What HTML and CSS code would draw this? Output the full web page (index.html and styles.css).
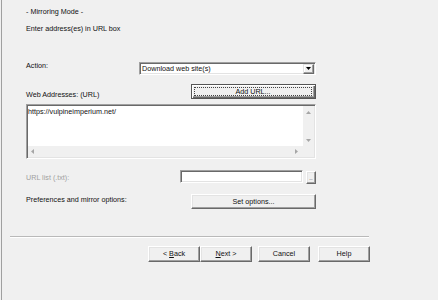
FILE: index.html
```html
<!DOCTYPE html>
<html>
<head>
<meta charset="utf-8">
<link rel="stylesheet" href="styles.css">
</head>
<body>
<div class="frame">
  <div class="main">
    <div class="title">- Mirroring Mode -</div>
    <div class="intro">Enter address(es) in URL box</div>

    <div class="row row-action">
      <div class="label">Action:</div>
      <div class="select">
        <span class="select-text">Download web site(s)</span>
        <span class="select-btn">
          <svg width="5" height="3" viewBox="0 0 5 3"><path d="M0 0H5L2.5 3Z" fill="#000"/></svg>
        </span>
      </div>
    </div>

    <div class="row row-web">
      <div class="label label-web">Web Addresses: (URL)</div>
      <div class="btn btn-default btn-wide"><span class="focus">Add URL...</span></div>
    </div>

    <div class="textarea">
      <div class="ta-text">https://vulpineimperium.net/</div>
      <div class="vscroll">
        <svg width="5" height="3" viewBox="0 0 5 3"><path d="M0 3H5L2.5 0Z" fill="#a6a6a6"/></svg>
        <svg width="5" height="3" viewBox="0 0 5 3"><path d="M0 0H5L2.5 3Z" fill="#a6a6a6"/></svg>
      </div>
      <div class="hscroll">
        <svg width="3" height="5" viewBox="0 0 3 5"><path d="M3 0V5L0 2.5Z" fill="#a6a6a6"/></svg>
        <svg width="3" height="5" viewBox="0 0 3 5"><path d="M0 0V5L3 2.5Z" fill="#a6a6a6"/></svg>
      </div>
      <div class="corner"></div>
    </div>

    <div class="row row-url">
      <div class="label label-url disabled">URL list (.txt):</div>
      <div class="url-group">
        <div class="input"></div>
        <div class="btn btn-dots">..</div>
      </div>
    </div>

    <div class="row row-prefs">
      <div class="label label-prefs">Preferences and mirror options:</div>
      <div class="btn btn-wide">Set options...</div>
    </div>
  </div>

  <div class="sep"></div>

  <div class="buttons">
    <div class="btn btn-nav">&lt;&nbsp;<u>B</u>ack</div>
    <div class="btn btn-nav"><u>N</u>ext &gt;</div>
    <div class="btn btn-nav btn-cancel">Cancel</div>
    <div class="btn btn-nav btn-help">Help</div>
  </div>
</div>
</body>
</html>
```

FILE: styles.css
```css
* { box-sizing: border-box; }
html, body { margin: 0; padding: 0; }
body {
  background: #f0f0f0;
  font-family: "Liberation Sans", Arial, sans-serif;
  font-size: 7.2px;
  color: #111;
  width: 438px;
  height: 300px;
  overflow: hidden;
}
.frame {
  margin-left: 1px;
  border-left: 1px solid #a0a0a0;
  height: 300px;
}
.main {
  padding-left: 24px;
  width: 314px;
}
.title {
  padding-top: 8px;
  line-height: 8px;
}
.intro {
  margin-top: 9px;
  line-height: 8px;
}
.row {
  display: flex;
  align-items: flex-start;
  justify-content: space-between;
}
.label { line-height: 8px; white-space: nowrap; }
.disabled { color: #a0a0a0; }

.row-action { margin-top: 29px; }
.select {
  width: 177px;
  height: 13px;
  background: #fff;
  border: 1px solid;
  border-color: #a0a0a0 #fff #fff #a0a0a0;
  box-shadow: inset 1px 1px #696969, inset -1px -1px #e3e3e3;
  display: flex;
  align-items: center;
  justify-content: space-between;
  padding: 1px 1px 1px 2px;
}
.select-text { line-height: 8px; padding-top: 1px; }
.select-btn {
  width: 11px;
  height: 10px;
  background: #f0f0f0;
  border: 1px solid;
  border-color: #e3e3e3 #696969 #696969 #e3e3e3;
  box-shadow: inset -1px -1px #a0a0a0, inset 1px 1px #fff;
  display: flex;
  align-items: center;
  justify-content: center;
}

.btn {
  background: #f0f0f0;
  border: 1px solid;
  border-color: #fff #696969 #696969 #fff;
  box-shadow: inset -1px -1px #a0a0a0, inset 1px 1px #e3e3e3;
  display: flex;
  align-items: center;
  justify-content: center;
  line-height: 8px;
  white-space: nowrap;
}
.btn-wide { width: 125px; height: 15px; }
.btn-default {
  border: 1px solid #555;
  box-shadow: inset 1px 1px #fff, inset -1px -1px #696969, inset -2px -2px #a0a0a0;
  padding: 2px 3px 2px 2px;
}
.focus {
  flex: 1;
  height: 9px;
  border: 1px dotted #444;
  display: flex;
  align-items: center;
  justify-content: center;
  line-height: 7px;
}

.row-web { margin-top: 9px; }
.label-web { margin-top: 7px; }

.textarea {
  margin-top: 5px;
  width: 290px;
  height: 55px;
  border: 1px solid;
  border-color: #a0a0a0 #fff #fff #a0a0a0;
  box-shadow: inset 1px 1px #696969, inset -1px -1px #e3e3e3;
  padding: 1px;
  display: grid;
  grid-template-columns: 1fr 11px;
  grid-template-rows: 1fr 11px;
}
.ta-text {
  background: #fff;
  line-height: 8px;
  padding: 2px 0 0 0;
}
.vscroll {
  background: #f0f0f0;
  display: flex;
  flex-direction: column;
  align-items: center;
  justify-content: space-between;
  padding: 5px 0 4px;
}
.hscroll {
  background: #f0f0f0;
  display: flex;
  align-items: center;
  justify-content: space-between;
  padding: 0 5px 0 3px;
}
.corner { background: #f0f0f0; }

.row-url { margin-top: 11px; }
.label-url { margin-top: 4px; }
.url-group { display: flex; align-items: flex-start; }
.input {
  width: 123px;
  height: 13px;
  background: #fff;
  border: 1px solid;
  border-color: #a0a0a0 #fff #fff #a0a0a0;
  box-shadow: inset 1px 1px #696969, inset -1px -1px #e3e3e3;
}
.btn-dots {
  width: 10px;
  height: 13px;
  margin-left: 3px;
  margin-top: 1px;
  align-items: flex-end;
  padding-bottom: 2px;
  font-size: 6px;
  line-height: 6px;
}

.row-prefs { margin-top: 10px; }
.label-prefs { margin-top: 2px; }

.sep {
  margin-top: 27px;
  margin-left: 8px;
  width: 359px;
  border-top: 1px solid #b9b9b9;
  border-bottom: 1px solid #fff;
}
.buttons {
  margin-top: 8px;
  margin-left: 146px;
  display: flex;
}
.btn-nav { width: 52px; height: 16px; }
.btn-cancel { margin-left: 6px; }
.btn-help { margin-left: 8px; }
u { text-decoration: underline; }
```
